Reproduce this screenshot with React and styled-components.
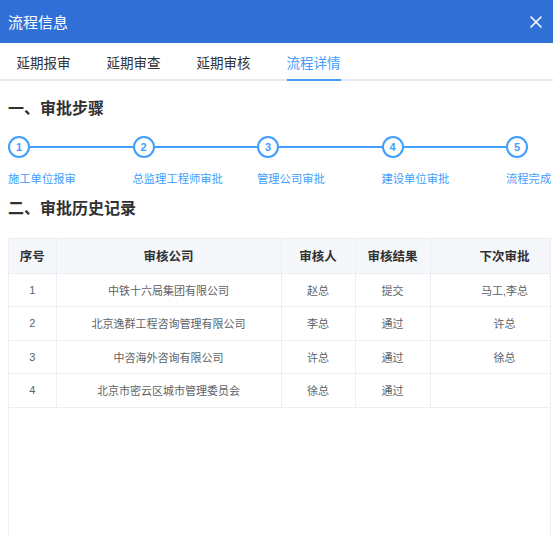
import React from 'react';
import styled, { createGlobalStyle } from 'styled-components';

const GlobalStyle = createGlobalStyle`
  html, body {
    margin: 0;
    padding: 0;
    background: #fff;
  }
  body {
    font-family: "Liberation Sans", "Noto Sans CJK SC", sans-serif;
    overflow: hidden;
  }
  * { box-sizing: border-box; }
`;

const Dialog = styled.div`
  width: 553px;
  height: 537px;
  overflow: hidden;
  background: #fff;
`;

const Header = styled.div`
  height: 43px;
  background: #2f6fd6;
  display: flex;
  align-items: center;
  justify-content: space-between;
  padding: 0 11px 0 8px;
`;

const Title = styled.span`
  color: #fff;
  font-size: 15px;
`;

const Close = styled.button`
  border: 0;
  background: none;
  padding: 0;
  width: 12px;
  height: 12px;
  display: flex;
  cursor: pointer;
`;

const TabBar = styled.div`
  height: 38px;
  display: flex;
  gap: 36px;
  padding-left: 16.5px;
  border-bottom: 2px solid #e4e7ed;
`;

const Tab = styled.div`
  position: relative;
  height: 36px;
  padding-top: 2px;
  display: flex;
  align-items: center;
  font-size: 13.5px;
  color: ${(p) => (p.$active ? '#409eff' : '#303133')};

  &::after {
    content: '';
    display: ${(p) => (p.$active ? 'block' : 'none')};
    position: absolute;
    left: 0;
    right: 0;
    bottom: -2px;
    height: 2px;
    background: #409eff;
  }
`;

const Content = styled.div`
  padding: 0 2px 0 8px;
`;

const SectionTitle = styled.h3`
  margin: ${(p) => p.$top}px 0 0;
  font-size: 16px;
  line-height: 20px;
  font-weight: bold;
  color: #303133;
`;

const Steps = styled.div`
  display: flex;
  width: calc(100% + 2px);
  margin-top: 17px;
`;

const Step = styled.div`
  flex: ${(p) => (p.$last ? '0 0 47px' : '1 1 0')};
  min-width: 0;
`;

const StepHead = styled.div`
  display: flex;
  align-items: center;
  height: 22px;
`;

const Circle = styled.div`
  flex: none;
  width: 22px;
  height: 22px;
  border: 2px solid #409eff;
  border-radius: 50%;
  display: flex;
  align-items: center;
  justify-content: center;
  color: #409eff;
  font-size: 11px;
  font-weight: bold;
  background: #fff;
`;

const Line = styled.div`
  flex: 1;
  height: 2px;
  background: #409eff;
`;

const StepLabel = styled.div`
  margin-top: 13px;
  font-size: 11.3px;
  line-height: 16px;
  color: #409eff;
  white-space: nowrap;
`;

const TableWrap = styled.div`
  margin-top: 19px;
  height: 320px;
  border: 1px solid #ebeef5;
  overflow: hidden;
`;

const Table = styled.table`
  width: 570px;
  border-collapse: collapse;
  table-layout: fixed;
`;

const Th = styled.th`
  height: 34px;
  background: #f5f7fa;
  border-right: 1px solid #ebeef5;
  border-bottom: 1px solid #ebeef5;
  font-size: 12.5px;
  font-weight: bold;
  color: #303133;
  text-align: center;
  padding: 0;
`;

const Td = styled.td`
  height: 33.5px;
  border-right: 1px solid #ebeef5;
  border-bottom: 1px solid #ebeef5;
  font-size: 11px;
  color: #606266;
  text-align: center;
  padding: 0;
`;

const tabs = ['延期报审', '延期审查', '延期审核', '流程详情'];

const steps = ['施工单位报审', '总监理工程师审批', '管理公司审批', '建设单位审批', '流程完成'];

const rows = [
  ['1', '中铁十六局集团有限公司', '赵总', '提交', '马工,李总'],
  ['2', '北京逸群工程咨询管理有限公司', '李总', '通过', '许总'],
  ['3', '中咨海外咨询有限公司', '许总', '通过', '徐总'],
  ['4', '北京市密云区城市管理委员会', '徐总', '通过', ''],
];

const cols = [47, 225, 74, 75, 149];

export default function App() {
  return (
    <Dialog>
      <GlobalStyle />
      <Header>
        <Title>流程信息</Title>
        <Close aria-label="close">
          <svg width="12" height="12" viewBox="0 0 12 12">
            <path d="M1 1L11 11M11 1L1 11" stroke="#fff" strokeWidth="1.6" strokeLinecap="round" />
          </svg>
        </Close>
      </Header>
      <TabBar>
        {tabs.map((t, i) => (
          <Tab key={t} $active={i === 3}>{t}</Tab>
        ))}
      </TabBar>
      <Content>
        <SectionTitle $top={18}>一、审批步骤</SectionTitle>
        <Steps>
          {steps.map((s, i) => {
            const last = i === steps.length - 1;
            return (
              <Step key={s} $last={last}>
                <StepHead>
                  <Circle>{i + 1}</Circle>
                  {!last && <Line />}
                </StepHead>
                <StepLabel>{s}</StepLabel>
              </Step>
            );
          })}
        </Steps>
        <SectionTitle $top={12}>二、审批历史记录</SectionTitle>
        <TableWrap>
          <Table>
            <colgroup>
              {cols.map((w, i) => (
                <col key={i} style={{ width: w }} />
              ))}
            </colgroup>
            <thead>
              <tr>
                <Th>序号</Th>
                <Th>审核公司</Th>
                <Th>审核人</Th>
                <Th>审核结果</Th>
                <Th>下次审批</Th>
              </tr>
            </thead>
            <tbody>
              {rows.map((r) => (
                <tr key={r[0]}>
                  {r.map((c, j) => (
                    <Td key={j}>{c}</Td>
                  ))}
                </tr>
              ))}
            </tbody>
          </Table>
        </TableWrap>
      </Content>
    </Dialog>
  );
}
